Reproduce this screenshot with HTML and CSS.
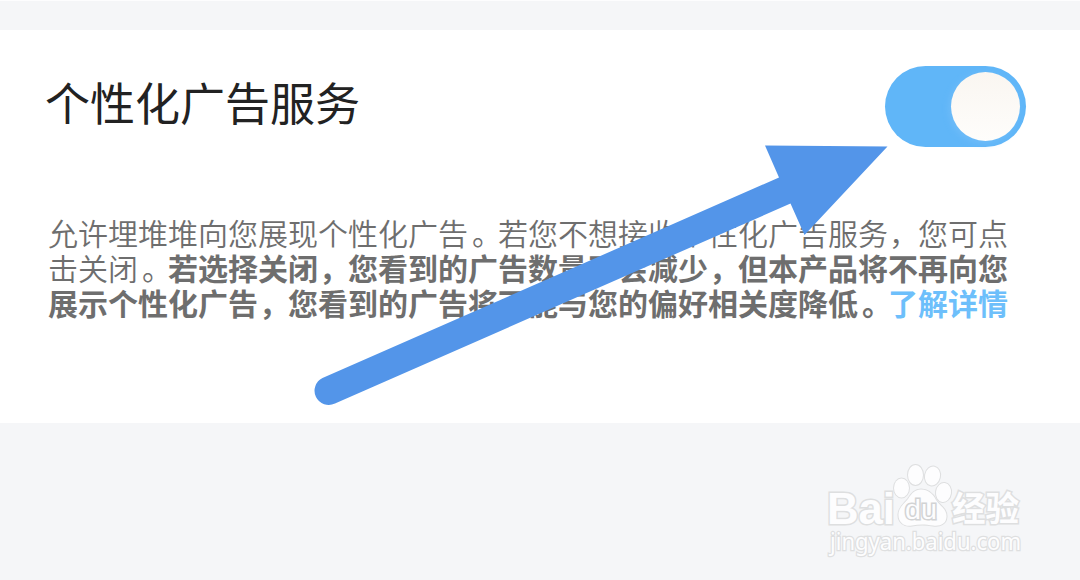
FILE: index.html
```html
<!DOCTYPE html>
<html lang="zh-CN">
<head>
<meta charset="utf-8">
<title>个性化广告服务</title>
<link rel="stylesheet" href="styles.css">
</head>
<body>
<main class="page">
  <section class="panel">
    <header class="setting">
      <h1 class="setting-title">个性化广告服务</h1>
      <div class="toggle" role="switch" aria-checked="true"><span class="toggle-knob"></span></div>
    </header>
    <p class="description">允许埋堆堆向您展现个性化广告<span class="stop">。</span>若您不想接收个性化广告服务<span class="comma">，</span>您可点<br>击关闭<span class="stop">。</span><strong>若选择关闭<span class="comma">，</span>您看到的广告数量不会减少<span class="comma">，</span>但本产品将不再向您<br>展示个性化广告<span class="comma">，</span>您看到的广告将可能与您的偏好相关度降低<span class="stop">。</span><a class="link">了解详情</a></strong></p>
  </section>
  <svg class="arrow" viewBox="0 0 1080 580" aria-hidden="true">
    <path d="M322.500 378 L779 177.500 L765 145.500 L887.500 146.500 L804.500 235 L790.500 203.500 L335 403.500 A14 14 0 1 1 322.500 378 Z"/>
  </svg>
  <svg class="watermark" viewBox="820 455 220 115" aria-label="Baidu 经验">
    <g class="mark">
      <text class="brand" x="827" y="524" textLength="68" lengthAdjust="spacingAndGlyphs">Bai</text>
      <ellipse cx="901.500" cy="488" rx="7.500" ry="9.500"/>
      <ellipse cx="915.500" cy="475" rx="7.500" ry="10"/>
      <ellipse cx="932.500" cy="476" rx="7.500" ry="9.500" transform="rotate(12 932.500 476)"/>
      <ellipse cx="943.500" cy="492.500" rx="7.500" ry="9.500" transform="rotate(8 943.500 492.500)"/>
      <path d="M921 489.500 C928 489.500 933 494 936 500 C940 506 947 509 946.500 517 C946 524 940 526.500 933 525.500 C925 524 919 524 912 525.500 C904 527 898 522 898.500 514 C899 507 904 504 908 499 C912 493 915 489.500 921 489.500Z"/>
      <text class="du" x="905" y="519" textLength="32" lengthAdjust="spacingAndGlyphs">du</text>
      <text class="experience" x="952" y="521" textLength="67" lengthAdjust="spacingAndGlyphs">经验</text>
      <text class="domain" x="830" y="550" textLength="191" lengthAdjust="spacingAndGlyphs">jingyan.baidu.com</text>
    </g>
  </svg>
</main>
</body>
</html>
```
FILE: styles.css
```css
body {
  margin: 0;
  background: #f5f6f8;
  font-family: "Noto Sans CJK SC", sans-serif;
}
.page {
  position: relative;
  box-sizing: border-box;
  width: 1080px;
  height: 580px;
  padding-top: 29px;
  border-top: 1px solid #fdfdfe;
  overflow: hidden;
}
.panel {
  box-sizing: border-box;
  height: 393px;
  padding: 36px 54px 0 45px;
  background: #fff;
}
.setting {
  display: flex;
  justify-content: space-between;
  height: 81px;
}
.setting-title {
  margin: 0;
  color: #222;
  font-size: 45px;
  font-weight: 400;
  line-height: 72px;
}
.toggle {
  display: flex;
  justify-content: flex-end;
  align-items: center;
  box-sizing: border-box;
  width: 141px;
  height: 81px;
  padding-right: 6px;
  border-radius: 41px;
  background: #60b6f8;
}
.toggle-knob {
  width: 69px;
  height: 69px;
  border-radius: 50%;
  background: linear-gradient(#faf6f1, #fefdfb);
  box-shadow: -2px 2px 6px #70bcf8;
}
.description {
  margin: 68px 0 0 3px;
  color: #6e6e6e;
  font-size: 30px;
  font-weight: 350;
  line-height: 35px;
  white-space: nowrap;
}
.description strong { font-weight: 700; }
.stop {
  margin-right: -4px;
  padding-left: 4px;
}
.comma {
  margin-right: -1px;
  padding-left: 1px;
}
.link { color: #6dbffb; }
.arrow {
  position: absolute;
  top: -1px;
  left: 0;
  width: 1080px;
  height: 580px;
  fill: #5395e9;
}
.watermark {
  position: absolute;
  top: 454px;
  left: 820px;
  width: 220px;
  height: 115px;
}
.mark {
  fill: #fdfdfe;
  stroke: #dedfe0;
  stroke-width: 2px;
  paint-order: stroke;
}
.brand {
  font: 700 44px "Liberation Sans", sans-serif;
  stroke-width: 3px;
}
.du {
  font: 400 27px "Liberation Sans", sans-serif;
  stroke: #d2d3d4;
  stroke-width: 3px;
}
.experience {
  font: 700 34px "Noto Sans CJK SC", sans-serif;
  stroke-width: 3px;
}
.domain {
  font: 400 23px "Noto Sans", sans-serif;
  stroke-width: 2.5px;
}
```
